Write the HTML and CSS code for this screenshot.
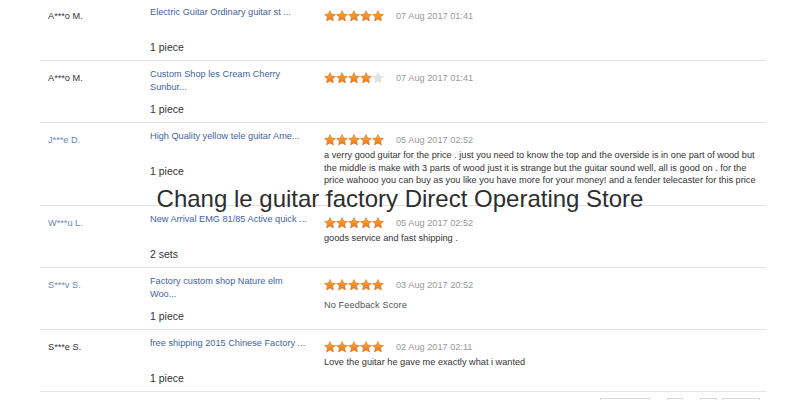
FILE: index.html
```html
<!DOCTYPE html>
<html>
<head>
<meta charset="utf-8">
<link rel="stylesheet" href="styles.css">
</head>
<body>
<svg class="defs" width="0" height="0">
  <defs>
    <linearGradient id="og" x1="0" y1="0" x2="0" y2="1">
      <stop offset="0" stop-color="#fbb040"/>
      <stop offset="1" stop-color="#e8731a"/>
    </linearGradient>
    <symbol id="star" viewBox="0 0 24 24">
      <path d="M12 1l3.3 7.1 7.7.8-5.8 5.2 1.7 7.7L12 17.9 5.1 21.8l1.7-7.7L1 8.9l7.7-.8z"/>
    </symbol>
  </defs>
</svg>
<div class="page">
  <div class="list">
    <div class="row">
      <div class="name">A***o M.</div>
      <div class="prod"><a class="title">Electric Guitar Ordinary guitar st ...</a><div class="qty">1 piece</div></div>
      <div class="rate">
        <div class="meta"><span class="stars"><svg class="on"><use href="#star"/></svg><svg class="on"><use href="#star"/></svg><svg class="on"><use href="#star"/></svg><svg class="on"><use href="#star"/></svg><svg class="on"><use href="#star"/></svg></span><span class="date">07 Aug 2017 01:41</span></div>
      </div>
    </div>
    <div class="row">
      <div class="name">A***o M.</div>
      <div class="prod"><a class="title">Custom Shop les Cream Cherry Sunbur...</a><div class="qty">1 piece</div></div>
      <div class="rate">
        <div class="meta"><span class="stars"><svg class="on"><use href="#star"/></svg><svg class="on"><use href="#star"/></svg><svg class="on"><use href="#star"/></svg><svg class="on"><use href="#star"/></svg><svg class="off"><use href="#star"/></svg></span><span class="date">07 Aug 2017 01:41</span></div>
      </div>
    </div>
    <div class="row">
      <div class="name blue">J***e D.</div>
      <div class="prod"><a class="title">High Quality yellow tele guitar Ame...</a><div class="qty">1 piece</div></div>
      <div class="rate">
        <div class="meta"><span class="stars"><svg class="on"><use href="#star"/></svg><svg class="on"><use href="#star"/></svg><svg class="on"><use href="#star"/></svg><svg class="on"><use href="#star"/></svg><svg class="on"><use href="#star"/></svg></span><span class="date">05 Aug 2017 02:52</span></div>
        <div class="comment">a verry good guitar for the price . just you need to know the top and the overside is in one part of wood but the middle is make with 3 parts of wood just it is strange but the guitar sound well, all is good on . for the price wahooo you can buy as you like you have more for your money! and a fender telecaster for this price .</div>
      </div>
    </div>
    <div class="row">
      <div class="name blue">W***u L.</div>
      <div class="prod"><a class="title">New Arrival EMG 81/85 Active quick ...</a><div class="qty">2 sets</div></div>
      <div class="rate">
        <div class="meta"><span class="stars"><svg class="on"><use href="#star"/></svg><svg class="on"><use href="#star"/></svg><svg class="on"><use href="#star"/></svg><svg class="on"><use href="#star"/></svg><svg class="on"><use href="#star"/></svg></span><span class="date">05 Aug 2017 02:52</span></div>
        <div class="comment">goods service and fast shipping .</div>
      </div>
    </div>
    <div class="row">
      <div class="name blue">S***v S.</div>
      <div class="prod"><a class="title">Factory custom shop Nature elm Woo...</a><div class="qty">1 piece</div></div>
      <div class="rate">
        <div class="meta"><span class="stars"><svg class="on"><use href="#star"/></svg><svg class="on"><use href="#star"/></svg><svg class="on"><use href="#star"/></svg><svg class="on"><use href="#star"/></svg><svg class="on"><use href="#star"/></svg></span><span class="date">03 Aug 2017 20:52</span></div>
        <div class="nofb">No Feedback Score</div>
      </div>
    </div>
    <div class="row">
      <div class="name">S***e S.</div>
      <div class="prod"><a class="title">free shipping 2015 Chinese Factory ...</a><div class="qty">1 piece</div></div>
      <div class="rate">
        <div class="meta"><span class="stars"><svg class="on"><use href="#star"/></svg><svg class="on"><use href="#star"/></svg><svg class="on"><use href="#star"/></svg><svg class="on"><use href="#star"/></svg><svg class="on"><use href="#star"/></svg></span><span class="date">02 Aug 2017 02:11</span></div>
        <div class="comment">Love the guitar he gave me exactly what i wanted</div>
      </div>
    </div>
  </div>
  <div class="pager">
    <span class="pbtn w50"></span>
    <span class="pbtn w16"></span>
    <span class="pbtn w17"></span>
    <span class="pbtn w38"></span>
  </div>
  <div class="watermark">Chang le guitar factory Direct Operating Store</div>
</div>
</body>
</html>
```
FILE: styles.css
```css
html, body {
  margin: 0;
  padding: 0;
  background: #fff;
}
body {
  font-family: "Liberation Sans", Arial, sans-serif;
  color: #333;
  overflow: hidden;
  height: 400px;
}
.defs {
  position: absolute;
  width: 0;
  height: 0;
}
.page {
  position: relative;
  width: 800px;
  height: 400px;
}
.list {
  margin: -1px 0 0 40px;
  width: 726px;
}
.row {
  display: grid;
  grid-template-columns: 110px 174px 1fr;
  border-bottom: 1px solid #e2e2e2;
  padding-bottom: 6px;
}
.name {
  padding: 11px 0 0 8px;
  font-size: 9.2px;
  line-height: 12px;
  color: #333;
}
.name.blue {
  color: #6c86b4;
}
.prod {
  padding-top: 7px;
}
.title {
  display: block;
  height: 25px;
  width: 159px;
  font-size: 9.2px;
  line-height: 12.5px;
  color: #3f64a0;
  text-decoration: none;
}
.qty {
  margin-top: 9px;
  font-size: 10.5px;
  line-height: 14px;
  color: #333;
}
.rate {
  padding-top: 11px;
}
.meta {
  display: flex;
  align-items: center;
  height: 12px;
}
.stars {
  display: flex;
  width: 60px;
}
.stars svg {
  width: 12px;
  height: 12px;
  flex: none;
}
.stars .on {
  fill: url(#og);
  stroke: #d9680f;
  stroke-width: 1;
  stroke-linejoin: round;
}
.stars .off {
  fill: #e2e2e2;
  stroke: #dcdcdc;
  stroke-width: 1;
  stroke-linejoin: round;
}
.date {
  margin-left: 12px;
  font-size: 9.2px;
  color: #999;
}
.comment {
  margin-top: 3px;
  font-size: 9.2px;
  line-height: 12.6px;
  color: #333;
  padding-right: 8px;
}
.nofb {
  margin-top: 8px;
  font-size: 9.2px;
  line-height: 12px;
  color: #555;
  letter-spacing: 0.1px;
}
.pager {
  display: flex;
  margin: 6px 0 0 600px;
}
.pbtn {
  display: block;
  height: 20px;
  border: 1px solid #d8d8d8;
  box-sizing: border-box;
}
.w50 { width: 50px; margin-right: 17px; }
.w16 { width: 16px; margin-right: 17px; }
.w17 { width: 17px; margin-right: 5px; }
.w38 { width: 38px; }
.watermark {
  position: absolute;
  left: 0;
  right: 0;
  top: 185px;
  text-align: center;
  font-size: 24px;
  line-height: 30px;
  color: #2e2e2e;
}
```
